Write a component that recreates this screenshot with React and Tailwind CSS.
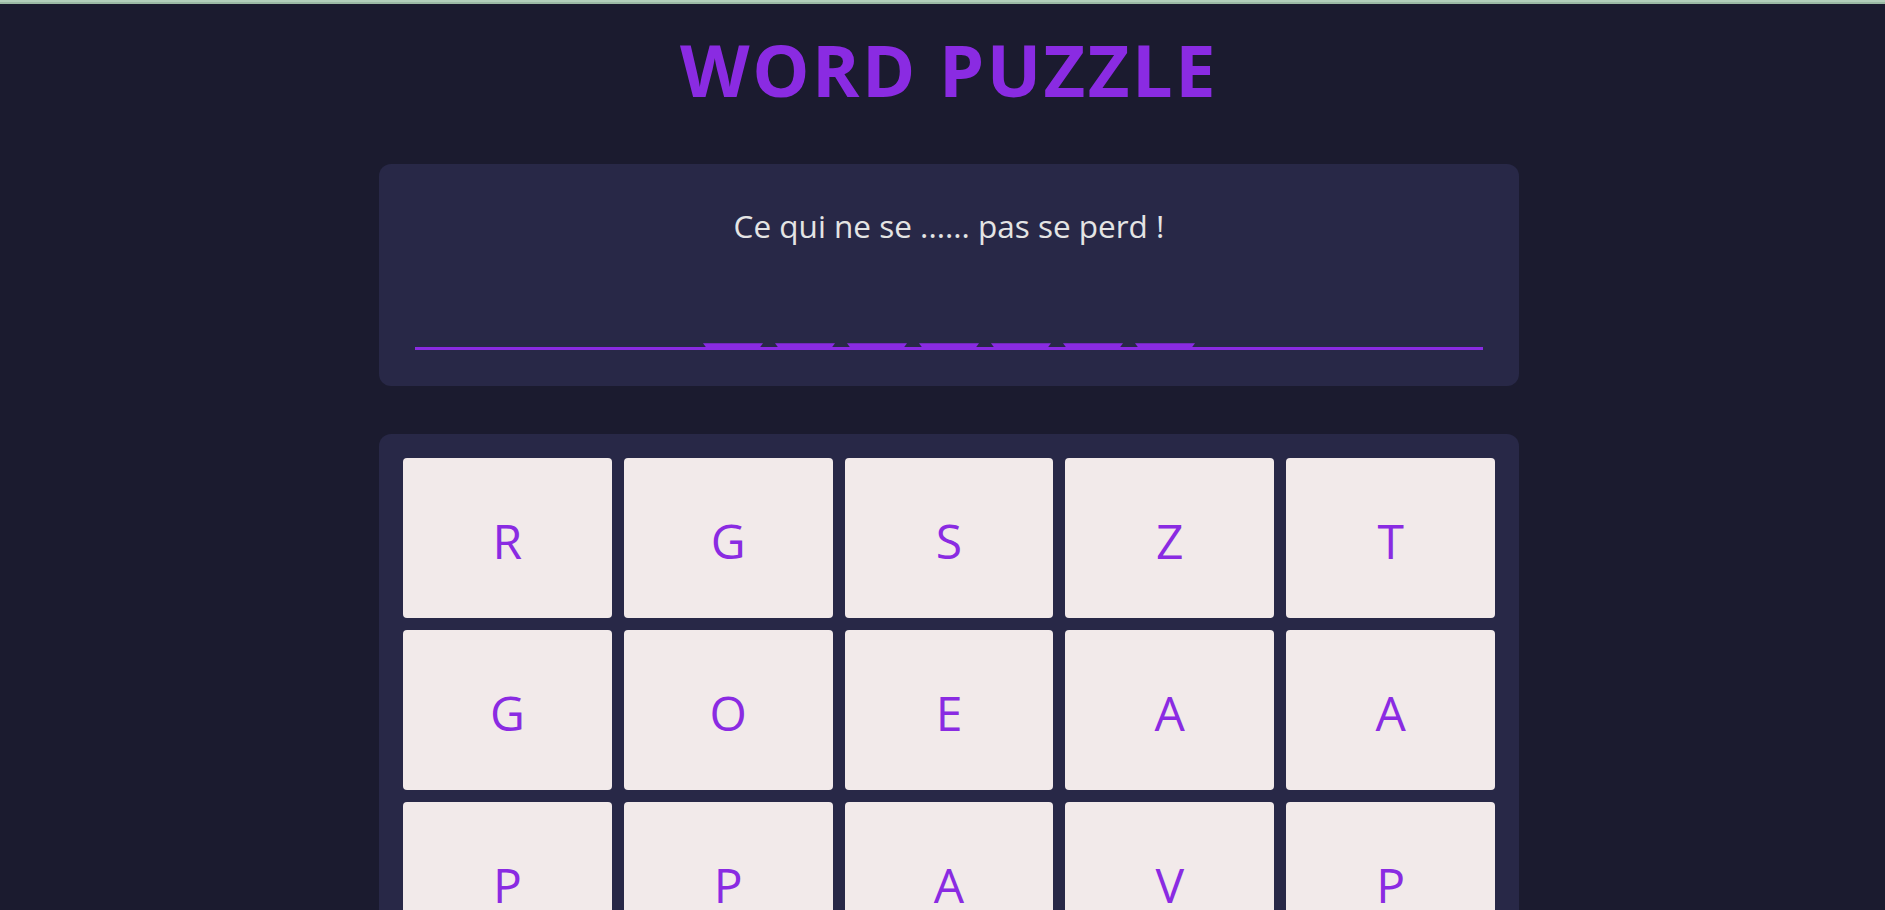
export default function App() {
  const letters = ["R", "G", "S", "Z", "T", "G", "O", "E", "A", "A", "P", "P", "A", "V", "P"];
  const slots = Array.from({ length: 7 });
  return (
    <div className="min-h-screen bg-[#1b1b2f] font-['Open_Sans','Noto_Sans',sans-serif]">
      <div className="h-[2px] bg-[#b3cfbb]" />
      <div className="h-[2px] bg-[#9bb9a4]" />
      <div className="flex flex-col items-center pl-[13px]">
        <h1 className="mt-[16px] text-[72px] font-bold leading-[1.362] tracking-[2.5px] text-[#8a2be2]">
          WORD PUZZLE
        </h1>
        <div className="mt-[46px] w-[1140px] rounded-xl bg-[#282847] px-9 pb-9 pt-[38px]">
          <p className="text-center text-[31.5px] leading-[1.5] text-[#e4e4e4]">
            Ce qui ne se ...... pas se perd !
          </p>
          <div className="mt-[94px]">
            <div className="flex justify-center gap-[12px]">
              {slots.map((_, i) => (
                <div
                  key={i}
                  className="h-[4px] w-[60px] bg-[#8a2be2] [clip-path:polygon(0_0,100%_0,calc(100%-3px)_100%,3px_100%)]"
                />
              ))}
            </div>
            <div className="h-[3px] bg-[#8a2be2]" />
          </div>
        </div>
        <div className="mt-[48px] w-[1140px] rounded-xl bg-[#282847] p-6">
          <div className="grid grid-cols-5 gap-3">
            {letters.map((l, i) => (
              <button
                key={i}
                className="flex h-[160px] items-center justify-center rounded-[4px] bg-[#f2eaea] pt-[6px] text-[48px] text-[#8a2be2]"
              >
                {l}
              </button>
            ))}
          </div>
        </div>
      </div>
    </div>
  );
}
